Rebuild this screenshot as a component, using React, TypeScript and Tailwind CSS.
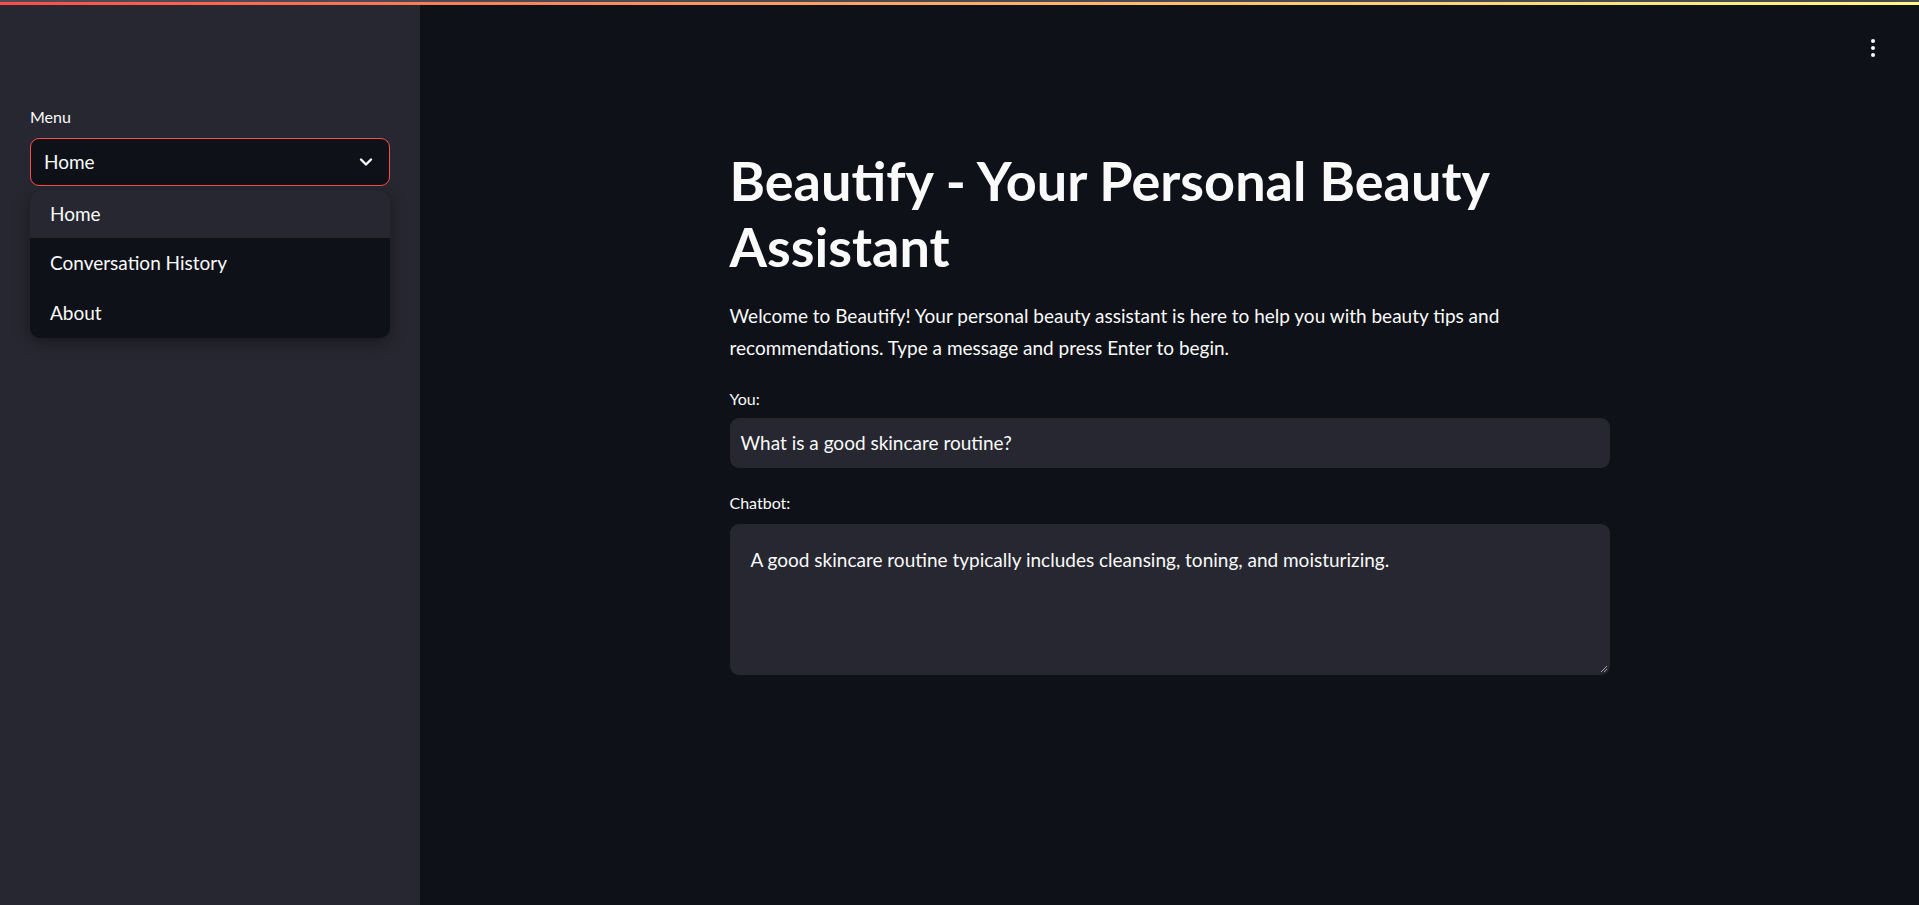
import React from "react";

const font = "font-['Lato','Noto_Sans',sans-serif]";

const Sidebar = () => {
  return (
    <div className="w-[420px] h-full bg-[#262730] pl-[30px] pr-[30px] pt-[101px]">
      <div className="text-[16px] leading-[22px] text-[#fafafa]">Menu</div>
      <div className="relative mt-[10px]">
        <div className="h-[48px] w-full rounded-[9px] border border-[#ff4b4b] bg-[#0e1117] flex items-center justify-between pl-[13px] pr-[16px]">
          <span className="text-[19px] text-[#fafafa]">Home</span>
          <svg width="14" height="10" viewBox="0 0 14 10" fill="none">
            <path d="M2 2.5 L7 7.5 L12 2.5" stroke="#fafafa" strokeWidth="2.4" strokeLinecap="round" strokeLinejoin="round" />
          </svg>
        </div>
        {/* open dropdown */}
        <div className="absolute left-0 right-0 top-[52px] rounded-[10px] bg-[#0e1117] overflow-hidden shadow-[0_4px_16px_rgba(0,0,0,0.35)]">
          <div className="h-[48px] flex items-center pl-[20px] bg-[#262730] text-[19px] text-[#fafafa]">Home</div>
          <div className="h-[50px] flex items-center pl-[20px] text-[19px] text-[#fafafa]">Conversation History</div>
          <div className="h-[50px] flex items-center pl-[20px] text-[19px] text-[#fafafa]">About</div>
        </div>
      </div>
    </div>
  );
};

const MainArea = () => {
  return (
    <div className="flex-1 h-full bg-[#0e1117] flex flex-col">
      <div className="h-[72px] flex justify-end pr-[44px] pt-[34px]">
        <div className="flex flex-col gap-[3px] items-center">
          <span className="w-[4px] h-[4px] rounded-full bg-[#fafafa]" />
          <span className="w-[4px] h-[4px] rounded-full bg-[#fafafa]" />
          <span className="w-[4px] h-[4px] rounded-full bg-[#fafafa]" />
        </div>
      </div>
      <div className="w-[880px] mx-auto pt-[71px]">
        <h1 className="text-[54px] leading-[66px] font-bold text-[#fafafa]">
          Beautify - Your Personal Beauty Assistant
        </h1>
        <p className="mt-[20px] text-[19px] leading-[32px] text-[#fafafa]">
          Welcome to Beautify! Your personal beauty assistant is here to help you with beauty tips and recommendations. Type a message and press Enter to begin.
        </p>
        <div className="mt-[24px] text-[16px] leading-[22px] text-[#fafafa]">You:</div>
        <div className="mt-[8px] h-[50px] rounded-[9px] bg-[#262730] flex items-center pl-[11px]">
          <span className="text-[19px] text-[#fafafa]">What is a good skincare routine?</span>
        </div>
        <div className="mt-[24px] text-[16px] leading-[22px] text-[#fafafa]">Chatbot:</div>
        <div className="relative mt-[10px] h-[151px] rounded-[9px] bg-[#262730] pl-[21px] pt-[20px]">
          <span className="text-[19px] leading-[32px] text-[#fafafa]">
            A good skincare routine typically includes cleansing, toning, and moisturizing.
          </span>
          <svg className="absolute right-[2px] bottom-[2px]" width="9" height="9" viewBox="0 0 9 9">
            <path d="M8 2 L2 8 M8 5 L5 8" stroke="#a0a0a8" strokeWidth="1" />
          </svg>
        </div>
      </div>
    </div>
  );
};

const App = () => {
  return (
    <div className={`w-full h-[905px] flex flex-col overflow-hidden ${font}`}>
      <div className="h-[2px] w-full bg-[#4a4a55]" />
      <div className="h-[3px] w-full bg-gradient-to-r from-[#ff4b4b] to-[#fffd80]" />
      <div className="flex-1 flex min-h-0">
        <Sidebar />
        <MainArea />
      </div>
    </div>
  );
};

export default App;
